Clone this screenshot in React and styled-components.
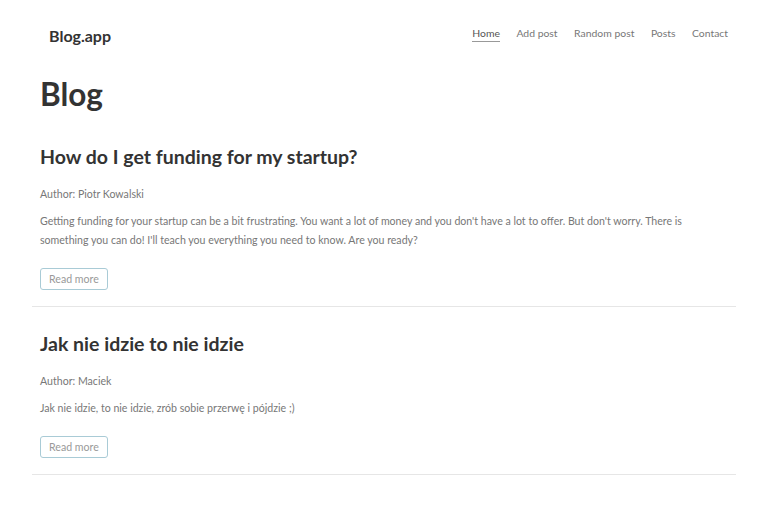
import React from 'react';
import styled, { createGlobalStyle } from 'styled-components';

const GlobalStyle = createGlobalStyle`
  body {
    margin: 0;
    background: #ffffff;
    font-family: 'Lato', 'Liberation Sans', sans-serif;
    color: #333333;
  }
`;

const Page = styled.div`
  width: 704px;
  margin: 0 auto;
`;

const Navbar = styled.nav`
  display: flex;
  align-items: center;
  justify-content: space-between;
  height: 68px;
  padding: 0 8px 0 17px;
`;

const Brand = styled.a`
  font-size: 16px;
  font-weight: 700;
  color: #333333;
  text-decoration: none;
  margin-top: 2px;
`;

const NavLinks = styled.ul`
  display: flex;
  gap: 16.5px;
  list-style: none;
  margin: 0 0 8px;
  padding: 0;
`;

const NavLink = styled.a`
  font-size: 10.4px;
  color: ${props => props.$active ? '#555555' : '#777777'};
  text-decoration: none;
  padding-bottom: 2px;
  border-bottom: 1px solid ${props => props.$active ? '#999999' : 'transparent'};
`;

const Main = styled.main`
  padding: 0 8px;
`;

const Title = styled.h1`
  font-size: 31.5px;
  font-weight: 700;
  margin: 6px 0 30px;
  line-height: 40px;
`;

const Post = styled.article`
  padding: 0 8px 16px;
  border-bottom: 1px solid #e6e6e6;
  margin: 0 -8px 24px;
`;

const PostTitle = styled.h2`
  font-size: 19.5px;
  font-weight: 700;
  line-height: 26px;
  margin: 0 0 17px;
`;

const Author = styled.p`
  font-size: 10.6px;
  color: #777777;
  margin: 0 0 11px;
  line-height: 14px;
`;

const Excerpt = styled.p`
  font-size: 10.6px;
  color: #777777;
  line-height: 19px;
  margin: 0 0 17px;
`;

const ReadMore = styled.button`
  font-family: inherit;
  font-size: 10.6px;
  color: #999999;
  background: #ffffff;
  border: 1px solid #a9cbd6;
  border-radius: 3px;
  padding: 0 8px;
  height: 22px;
`;

const posts = [
  {
    title: 'How do I get funding for my startup?',
    author: 'Piotr Kowalski',
    excerpt: "Getting funding for your startup can be a bit frustrating. You want a lot of money and you don't have a lot to offer. But don't worry. There is something you can do! I'll teach you everything you need to know. Are you ready?",
  },
  {
    title: 'Jak nie idzie to nie idzie',
    author: 'Maciek',
    excerpt: 'Jak nie idzie, to nie idzie, zrób sobie przerwę i pójdzie ;)',
  },
];

export default function App() {
  return (
    <Page>
      <GlobalStyle />
      <Navbar>
        <Brand href="#">Blog.app</Brand>
        <NavLinks>
          <li><NavLink href="#" $active>Home</NavLink></li>
          <li><NavLink href="#">Add post</NavLink></li>
          <li><NavLink href="#">Random post</NavLink></li>
          <li><NavLink href="#">Posts</NavLink></li>
          <li><NavLink href="#">Contact</NavLink></li>
        </NavLinks>
      </Navbar>
      <Main>
        <Title>Blog</Title>
        {posts.map(post => (
          <Post key={post.title}>
            <PostTitle>{post.title}</PostTitle>
            <Author>Author: {post.author}</Author>
            <Excerpt>{post.excerpt}</Excerpt>
            <ReadMore>Read more</ReadMore>
          </Post>
        ))}
      </Main>
    </Page>
  );
}
